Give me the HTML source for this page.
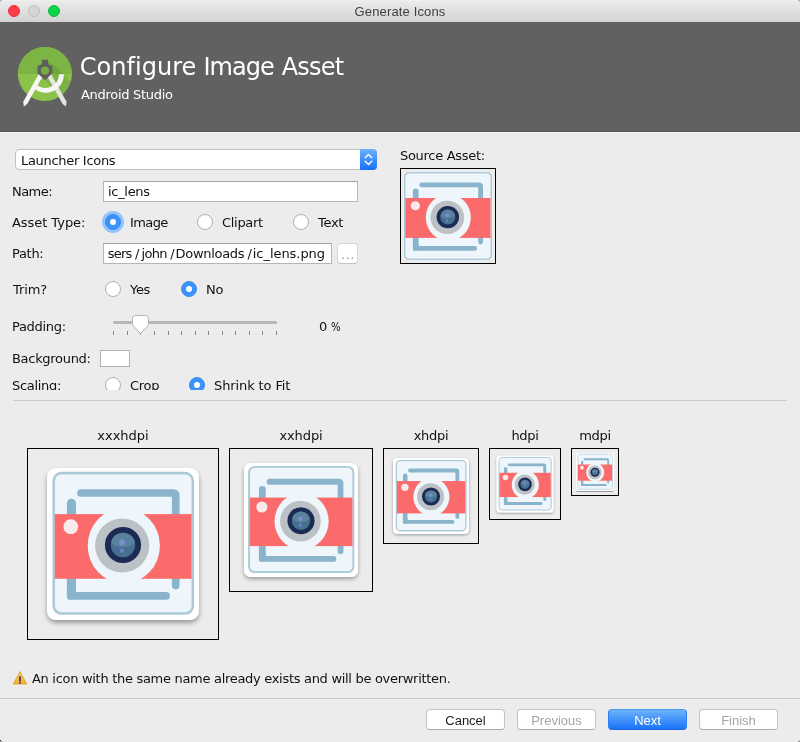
<!DOCTYPE html>
<html>
<head>
<meta charset="utf-8">
<title>Generate Icons</title>
<style>
html,body{margin:0;padding:0;}
body{width:800px;height:742px;position:relative;overflow:hidden;background:#ececec;font-family:"DejaVu Sans","Liberation Sans",sans-serif;font-size:13px;color:#111;letter-spacing:-0.3px;}
.abs{position:absolute;}
.t,.lbl,.btn{will-change:transform;}
.t{position:absolute;white-space:nowrap;line-height:16px;height:16px;}
#titlebar{left:0;top:0;width:800px;height:22px;background:linear-gradient(#f4f4f4 0,#ebebeb 1px,#d3d3d3 100%);}
#title{left:0;width:800px;top:4px;text-align:center;font-family:"Liberation Sans",sans-serif;font-size:13px;color:#404040;letter-spacing:0.15px;}
.tl{position:absolute;top:5px;width:12px;height:12px;border-radius:50%;box-sizing:border-box;}
#header{left:0;top:22px;width:800px;height:110px;background:#616161;box-sizing:border-box;border-bottom:1px solid #575757;box-shadow:0 1px 0 #f4f4f4;}
#h1{left:81px;top:51px;font-size:24px;line-height:32px;height:32px;color:#fff;letter-spacing:-0.4px;}
#h2{left:81px;top:87px;color:#fff;}
.field{position:absolute;background:#fff;border:1px solid #b5b5b5;border-top-color:#a4a4a4;box-sizing:border-box;}
.radio{position:absolute;width:16px;height:16px;border-radius:50%;box-sizing:border-box;background:#fff;border:1px solid #b0b0b0;}
.radio.on{background:#3a93fb;border:1px solid #388cf4;}
.radio.on::after{content:"";position:absolute;left:4px;top:4px;width:6px;height:6px;border-radius:50%;background:#fff;}
.sg{position:absolute;top:0;}
.box{position:absolute;border:1px solid #000;box-sizing:border-box;}
.lbl{position:absolute;text-align:center;white-space:nowrap;line-height:16px;}
.btn{position:absolute;top:709px;height:21px;width:79px;box-sizing:border-box;border:1px solid #c3c3c3;border-radius:4px;background:#fff;font-family:"Liberation Sans",sans-serif;font-size:13px;letter-spacing:0;text-align:center;line-height:21px;color:#1e1e1e;border-bottom-color:#acacac;}
</style>
</head>
<body>

<svg width="0" height="0" style="position:absolute">
  <defs>
    <filter id="sh" x="-10%" y="-10%" width="120%" height="125%">
      <feGaussianBlur in="SourceAlpha" stdDeviation="2.7"/>
      <feOffset dy="2.8" result="b"/>
      <feComponentTransfer><feFuncA type="linear" slope="0.36"/></feComponentTransfer>
      <feMerge><feMergeNode/><feMergeNode in="SourceGraphic"/></feMerge>
    </filter>
    <clipPath id="lensclip"><circle cx="96" cy="97" r="12.2"/></clipPath>
    <g id="camg">
      <rect x="26.75" y="25.15" width="139.1" height="140.3" rx="7.5" fill="#eef6fb" stroke="#adcad8" stroke-width="2.6"/>
      <path d="M54 45 H146.2 Q148.7 45 148.7 47.5 V137.6" fill="none" stroke="#8ab4cc" stroke-width="7.7" stroke-linecap="round"/>
      <path d="M44.45 55.3 V147" fill="none" stroke="#8ab4cc" stroke-width="9.1" stroke-linecap="round"/>
      <path d="M39.9 140 H49 V144.1 H139.2 A3.8 3.8 0 0 1 139.2 151.7 H42.4 Q39.9 151.7 39.9 149.2 Z" fill="#8ab4cc"/>
      <rect x="27.8" y="66.1" width="136.8" height="64.7" fill="#fb6b6c"/>
      <circle cx="43.8" cy="78.7" r="7.4" fill="#fbeaeb"/>
      <ellipse cx="96.8" cy="97.7" rx="36.1" ry="37.7" fill="#eef6fb"/>
      <circle cx="95.2" cy="97.5" r="27.1" fill="#bcc1c5"/>
      <circle cx="96" cy="97" r="18.1" fill="#1c2b53"/>
      <circle cx="96" cy="97" r="12.2" fill="#46708f"/>
      <ellipse cx="96" cy="86" rx="16" ry="13" fill="#5a819e" clip-path="url(#lensclip)"/>
      <circle cx="95.1" cy="94.3" r="3.1" fill="#7b8fd0"/>
      <circle cx="95" cy="102.8" r="2.1" fill="#6f83c8"/>
    </g>
    <symbol id="cam" viewBox="25.6 24 141.4 142.6" preserveAspectRatio="none"><use href="#camg"/></symbol>
    <symbol id="launch" viewBox="0 0 192 192">
      <rect x="20" y="20" width="152" height="152" rx="9" fill="#fff" filter="url(#sh)"/>
      <use href="#camg"/>
    </symbol>
  </defs>
</svg>
<div id="titlebar" class="abs"></div>
<div class="tl" style="left:8px;background:#fe3c48;border:1px solid #ee2d3a;"></div>
<div class="tl" style="left:28px;background:#d6d6d6;border:1px solid #bdbdbd;"></div>
<div class="tl" style="left:48px;background:#07d646;border:1px solid #12b93c;"></div>
<div class="abs" style="left:0;top:0;width:2px;height:1px;background:#b8b8b8;"></div>
<div class="abs" style="left:0;top:1px;width:1px;height:1px;background:#cfcfcf;"></div>
<div class="abs" style="left:798px;top:0;width:2px;height:1px;background:#b8b8b8;"></div>
<div class="abs" style="left:799px;top:1px;width:1px;height:1px;background:#cfcfcf;"></div>
<div id="title" class="t">Generate Icons</div>

<div id="header" class="abs"></div>
<svg class="abs" style="left:10px;top:40px" width="70" height="70" viewBox="10 40 70 70">
  <defs><clipPath id="cc"><circle cx="44.9" cy="74" r="27"/></clipPath></defs>
  <circle cx="44.9" cy="74" r="27" fill="#8bc34a"/>
  <rect x="17" y="46" width="56" height="28" fill="#7db544" clip-path="url(#cc)"/>
  <path d="M48 62 L53 64 L80 91 L80 120 L45 80 Z" fill="#000" fill-opacity="0.09" clip-path="url(#cc)"/>
  <path d="M50.35 72.76 L66.55 101.75 L66 106.5 L62.6 103.9 L46.4 74.9 Z" fill="#e4e4e4"/>
  <path d="M39.45 72.76 L23.25 101.75 L23.8 106.5 L27.2 103.9 L43.4 74.9 Z" fill="#f6f6f6"/>
  <path d="M34.6 86 A16 16 0 0 0 61.5 74.3" fill="none" stroke="#f6f6f6" stroke-width="5"/>
  <path d="M41.9 59.8 H48.2 V64.2 L52.3 66 V73.2 L45 80.2 L37.5 73.2 V66 L41.9 64.2 Z" fill="#5f5f5f"/>
  <circle cx="45" cy="70.6" r="4.1" fill="#76ad42"/>
</svg>
<div id="h1" class="t" style="left:0;width:400px;"><span class="sg" style="left:79.8px;letter-spacing:0.03px;">Configure </span><span class="sg" style="left:203.4px;letter-spacing:-0.95px;">Image </span><span class="sg" style="left:281.7px;letter-spacing:-0.78px;">Asset</span></div>
<div id="h2" class="t">Android Studio</div>

<!-- combo -->
<div class="field" style="left:15px;top:149px;width:362px;height:21px;border-radius:4px;border-color:#c0c0c0;"></div>
<div class="abs" style="left:360px;top:149px;width:17px;height:21px;border-radius:0 4px 4px 0;background:linear-gradient(#6db3fb,#3f90fb 50%,#1a6efb);"></div>
<svg class="abs" style="left:360px;top:149px" width="17" height="21" viewBox="0 0 17 21"><path d="M5.2 8.7 L8.5 5.4 L11.8 8.7 M5.2 12.3 L8.5 15.6 L11.8 12.3" fill="none" stroke="#fff" stroke-width="1.4" stroke-linecap="round" stroke-linejoin="round"/></svg>
<div class="t" style="left:21px;top:153px;">Launcher Icons</div>

<div class="t" style="left:12px;top:184px;letter-spacing:-0.55px;">Name:</div>
<div class="field" style="left:103px;top:181px;width:255px;height:21px;"></div>
<div class="t" style="left:108px;top:184px;">ic_lens</div>

<div class="t" style="left:12px;top:215px;letter-spacing:-0.05px;">Asset Type:</div>
<div class="abs" style="left:102px;top:211px;width:22px;height:22px;border-radius:50%;background:#93c3f9;"></div>
<div class="radio on" style="left:105px;top:214px;"></div>
<div class="t" style="left:130px;top:215px;letter-spacing:-0.6px;">Image</div>
<div class="radio" style="left:197px;top:214px;"></div>
<div class="t" style="left:222px;top:215px;">Clipart</div>
<div class="radio" style="left:293px;top:214px;"></div>
<div class="t" style="left:318px;top:215px;">Text</div>

<div class="t" style="left:12px;top:246px;">Path:</div>
<div class="field" style="left:103px;top:243px;width:229px;height:21px;"></div>
<div class="t" id="pathtxt" style="left:0;top:246px;width:332px;"><span class="sg" style="left:107.7px;letter-spacing:-0.75px;">sers</span><span class="sg" style="left:134.9px;">/</span><span class="sg" style="left:141.6px;letter-spacing:-0.7px;">john</span><span class="sg" style="left:170.2px;">/</span><span class="sg" style="left:175.6px;">Downloads</span><span class="sg" style="left:247.5px;">/</span><span class="sg" style="left:252.8px;letter-spacing:-0.05px;">ic_lens.png</span></div>
<div class="field" style="left:337px;top:243px;width:21px;height:21px;border-radius:4px;border-color:#d6d6d6 #d6d6d6 #c2c2c2;"></div>
<div class="t" style="left:341px;top:247px;color:#9a9a9a;letter-spacing:0.5px;">...</div>

<div class="t" style="left:12.5px;top:282px;letter-spacing:-0.1px;">Trim?</div>
<div class="radio" style="left:105px;top:281px;"></div>
<div class="t" style="left:130px;top:282px;">Yes</div>
<div class="radio on" style="left:181px;top:281px;"></div>
<div class="t" style="left:206px;top:282px;">No</div>

<div class="t" style="left:12px;top:319px;">Padding:</div>
<div class="abs" style="left:113px;top:321px;width:164px;height:3px;border-radius:2px;background:#b7b7b7;"></div>
<svg class="abs" style="left:110px;top:312px" width="172" height="26" viewBox="0 0 172 26">
  <rect x="3" y="19" width="1" height="4" fill="#868686"/><rect x="17" y="19" width="1" height="4" fill="#868686"/><rect x="30" y="19" width="1" height="4" fill="#868686"/><rect x="44" y="19" width="1" height="4" fill="#868686"/><rect x="58" y="19" width="1" height="4" fill="#868686"/><rect x="71" y="19" width="1" height="4" fill="#868686"/><rect x="85" y="19" width="1" height="4" fill="#868686"/><rect x="98" y="19" width="1" height="4" fill="#868686"/><rect x="112" y="19" width="1" height="4" fill="#868686"/><rect x="125" y="19" width="1" height="4" fill="#868686"/><rect x="139" y="19" width="1" height="4" fill="#868686"/><rect x="152" y="19" width="1" height="4" fill="#868686"/><rect x="166" y="19" width="1" height="4" fill="#868686"/>
  <path d="M25.5 3.5 H35.5 A3 3 0 0 1 38.5 6.5 V11.5 Q38.5 13 37.5 14.1 L30.5 21.7 L23.5 14.1 Q22.5 13 22.5 11.5 V6.5 A3 3 0 0 1 25.5 3.5 Z" fill="#fff" stroke="#b4b4b4" stroke-width="1"/>
</svg>
<div class="t" style="left:0;top:319px;width:360px;"><span class="sg" style="left:318.9px;">0 </span><span class="sg" style="left:331.1px;transform:scaleX(0.78);transform-origin:0 0;">%</span></div>

<div class="t" style="left:12px;top:351px;">Background:</div>
<div class="field" style="left:100px;top:350px;width:30px;height:17px;border-color:#b2b2b2;"></div>

<div class="abs" style="left:0;top:370px;width:400px;height:20px;overflow:hidden;">
  <div class="t" style="left:12px;top:8px;">Scaling:</div>
  <div class="radio" style="left:105px;top:7px;"></div>
  <div class="t" style="left:130px;top:8px;">Crop</div>
  <div class="radio on" style="left:189px;top:7px;"></div>
  <div class="t" style="left:214px;top:8px;letter-spacing:-0.11px;">Shrink to Fit</div>
</div>
<div class="abs" style="left:13px;top:400px;width:774px;height:1px;background:#cbcbcb;"></div>

<div class="t" style="left:400px;top:148px;">Source Asset:</div>
<div class="box" style="left:400px;top:168px;width:96px;height:96px;"></div>

<div class="lbl" style="left:27px;width:192px;top:428px;letter-spacing:0;">xxxhdpi</div>
<div class="box" style="left:27px;top:448px;width:192px;height:192px;"></div>
<div class="lbl" style="left:229px;width:144px;top:428px;letter-spacing:-0.1px;">xxhdpi</div>
<div class="box" style="left:229px;top:448px;width:144px;height:144px;"></div>
<div class="lbl" style="left:383px;width:96px;top:428px;">xhdpi</div>
<div class="box" style="left:383px;top:448px;width:96px;height:96px;"></div>
<div class="lbl" style="left:489px;width:72px;top:428px;">hdpi</div>
<div class="box" style="left:489px;top:448px;width:72px;height:72px;"></div>
<div class="lbl" style="left:571px;width:48px;top:428px;">mdpi</div>
<div class="box" style="left:571px;top:448px;width:48px;height:48px;"></div>


<svg class="abs" style="left:404px;top:172px" width="88" height="88"><use href="#cam" width="88" height="88"/></svg>
<svg class="abs" style="left:27px;top:448px" width="192" height="192"><use href="#launch" width="192" height="192"/></svg>
<svg class="abs" style="left:229px;top:448px" width="144" height="144"><use href="#launch" width="144" height="144"/></svg>
<svg class="abs" style="left:383px;top:448px" width="96" height="96"><use href="#launch" width="96" height="96"/></svg>
<svg class="abs" style="left:489px;top:448px" width="72" height="72"><use href="#launch" width="72" height="72"/></svg>
<svg class="abs" style="left:571px;top:448px" width="48" height="48"><use href="#launch" width="48" height="48"/></svg>
<div class="t" style="left:32px;top:671px;">An icon with the same name already exists and will be overwritten.</div>

<div class="abs" style="left:0;top:698px;width:800px;height:1px;background:#c6c6c6;"></div>
<svg class="abs" style="left:12px;top:670px" width="16" height="16" viewBox="0 0 16 16">
  <defs><linearGradient id="wg" x1="0" y1="0" x2="0" y2="1"><stop offset="0" stop-color="#f8dc78"/><stop offset="1" stop-color="#f3a92c"/></linearGradient></defs>
  <path d="M8 1.6 L14.7 14 H1.3 Z" fill="url(#wg)" stroke="#eba92f" stroke-width="1" stroke-linejoin="round"/>
  <rect x="7.1" y="6.2" width="1.8" height="5.4" fill="#3d4068"/>
  <rect x="7.1" y="12.3" width="1.8" height="1.5" fill="#3d4068"/>
</svg>
<div class="abs" style="left:0;top:740px;width:1px;height:1px;background:#222;"></div>
<div class="abs" style="left:0;top:741px;width:3px;height:1px;background:#b4b4b4;"></div>
<div class="abs" style="left:798px;top:741px;width:2px;height:1px;background:#9a9a9a;"></div>
<div class="abs" style="left:799px;top:740px;width:1px;height:1px;background:#b4b4b4;"></div>
<div class="btn" style="left:426px;">Cancel</div>
<div class="btn" style="left:517px;color:#a5a5a5;">Previous</div>
<div class="btn" style="left:608px;color:#fff;background:linear-gradient(#6bb3fb,#1a74fb);border-color:#4a9af7 #2f80f3 #1f68e0;">Next</div>
<div class="btn" style="left:699px;color:#a5a5a5;">Finish</div>
</body>
</html>
